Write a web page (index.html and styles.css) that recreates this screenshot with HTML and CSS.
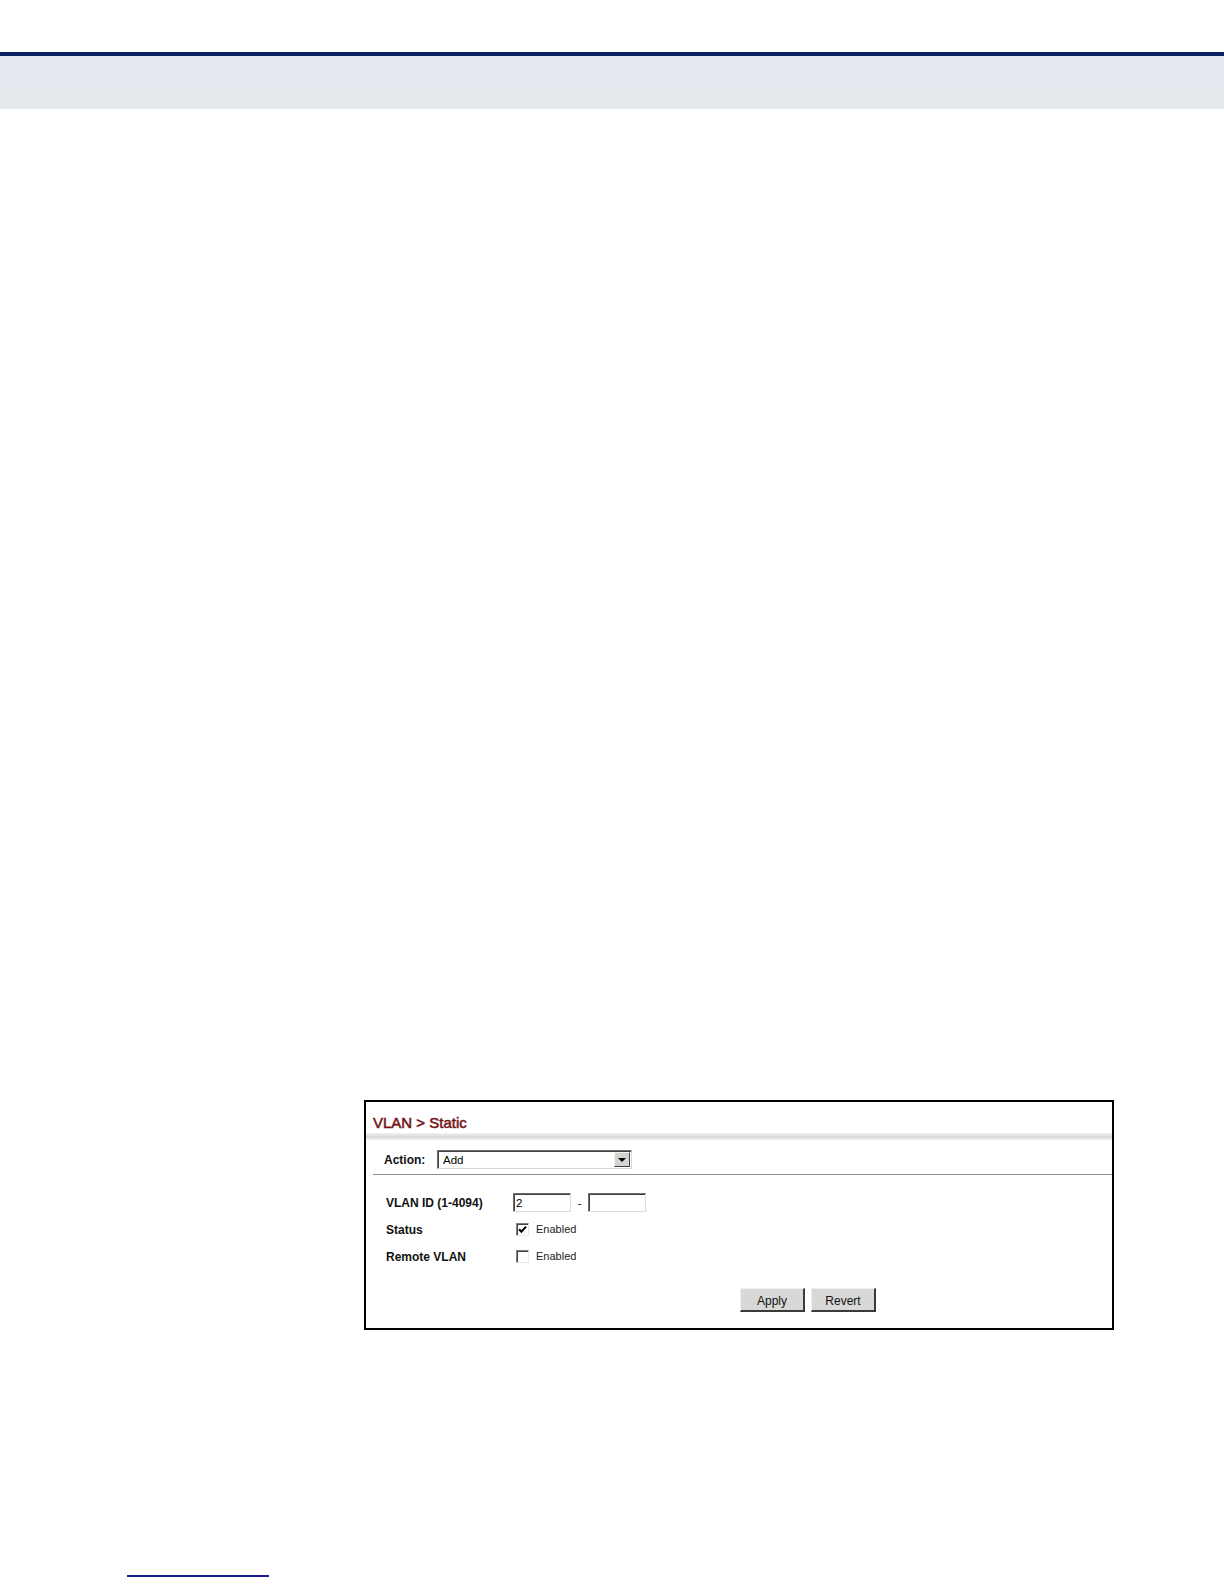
FILE: index.html
```html
<!DOCTYPE html>
<html>
<head>
<meta charset="utf-8">
<title>VLAN Static</title>
<link rel="stylesheet" href="styles.css">
</head>
<body>
<div class="page">
  <header class="page-header">
    <div class="rule"></div>
    <div class="band"></div>
  </header>

  <main class="content">
    <section class="panel">
      <h1 class="panel-title">VLAN &gt; Static</h1>
      <div class="title-shade"></div>

      <div class="action-row">
        <span class="label action-label">Action:</span>
        <div class="select">
          <span class="select-value">Add</span>
          <span class="select-btn">
            <svg width="8" height="4" viewBox="0 0 8 4"><path d="M0 0H8L4 4Z" fill="#000"/></svg>
          </span>
        </div>
      </div>
      <div class="separator"></div>

      <div class="form">
        <div class="form-row">
          <span class="label">VLAN ID (1-4094)</span>
          <div class="field">
            <span class="textbox short">2</span>
            <span class="dash">-</span>
            <span class="textbox short"></span>
          </div>
        </div>
        <div class="form-row">
          <span class="label">Status</span>
          <div class="field">
            <span class="checkbox">
              <svg width="9" height="9" viewBox="0 0 9 9"><path d="M1 4.2 L3.4 6.8 L8 1.6" fill="none" stroke="#000" stroke-width="2.1"/></svg>
            </span>
            <span class="check-text">Enabled</span>
          </div>
        </div>
        <div class="form-row">
          <span class="label">Remote VLAN</span>
          <div class="field">
            <span class="checkbox"></span>
            <span class="check-text">Enabled</span>
          </div>
        </div>
      </div>

      <div class="buttons">
        <span class="btn">Apply</span>
        <span class="btn">Revert</span>
      </div>
    </section>
  </main>

  <footer class="page-footer">
    <div class="footer-rule"></div>
  </footer>
</div>
</body>
</html>
```

FILE: styles.css
```css
* { box-sizing: border-box; }

html, body {
  margin: 0;
  padding: 0;
  background: #ffffff;
}

body {
  font-family: "Liberation Sans", Arial, sans-serif;
  color: #000;
}

.page {
  width: 1224px;
  height: 1584px;
  overflow: hidden;
}

.page-header {
  padding-top: 52px;
}

.rule {
  height: 4px;
  background: #0b2262;
}

.band {
  height: 53px;
  background: linear-gradient(#e4e8f1, #e6e9ec);
}

.content {
  padding-top: 991px;
  padding-left: 364px;
}

.panel {
  width: 750px;
  border: 2px solid #000;
  background: #fff;
  padding-bottom: 16px;
}

.panel-title {
  margin: 0;
  padding: 11px 0 0 7px;
  font-size: 15px;
  line-height: 20px;
  font-weight: normal;
  color: #761519;
  -webkit-text-stroke: 0.55px #761519;
}

.title-shade {
  height: 7px;
  background: linear-gradient(#f2f2f2, #d9d9d9 55%, #f3f3f3);
}

.action-row {
  display: flex;
  align-items: center;
  padding: 10px 0 5px 18px;
}

.label {
  font-size: 12px;
  font-weight: bold;
  color: #111;
}

.action-label {
  width: 53px;
}

.select {
  width: 195px;
  height: 19px;
  display: flex;
  align-items: center;
  justify-content: space-between;
  border-top: 1px solid #6f6f6f;
  border-left: 1px solid #6f6f6f;
  border-right: 1px solid #d8d8d8;
  border-bottom: 1px solid #d8d8d8;
  box-shadow: inset 1px 1px 0 #404040;
  padding: 0 1px 0 5px;
}

.select-value {
  font-size: 11.5px;
  color: #000;
}

.select-btn {
  width: 16px;
  height: 15px;
  background: #d6d3ce;
  border-top: 1px solid #f4f4f4;
  border-left: 1px solid #f4f4f4;
  border-right: 1px solid #404040;
  border-bottom: 1px solid #404040;
  display: flex;
  align-items: center;
  justify-content: center;
}

.separator {
  margin-left: 7px;
  border-top: 1px solid #8c8c8c;
}

.form {
  padding: 14px 0 0 20px;
}

.form-row {
  display: grid;
  grid-template-columns: 127px 1fr;
  align-items: center;
  height: 27px;
}

.field {
  display: flex;
  align-items: center;
}

.textbox {
  display: inline-flex;
  align-items: center;
  height: 19px;
  border-top: 1px solid #6f6f6f;
  border-left: 1px solid #6f6f6f;
  border-right: 1px solid #dcdcdc;
  border-bottom: 1px solid #dcdcdc;
  box-shadow: inset 1px 1px 0 #404040;
  padding-left: 2px;
  font-size: 11.5px;
}

.textbox.short {
  width: 58px;
}

.dash {
  width: 17px;
  text-align: center;
  font-size: 11px;
}

.checkbox {
  width: 13px;
  height: 13px;
  margin-left: 3px;
  border-top: 1px solid #808080;
  border-left: 1px solid #808080;
  border-right: 1px solid #e8e8e8;
  border-bottom: 1px solid #e8e8e8;
  box-shadow: inset 1px 1px 0 #404040;
  background: #fff;
  display: inline-flex;
  align-items: center;
  justify-content: center;
}

.check-text {
  margin-left: 7px;
  font-size: 11px;
  color: #222;
  position: relative;
  top: -1px;
}

.buttons {
  display: flex;
  gap: 6px;
  padding: 18px 0 0 374px;
}

.btn {
  width: 65px;
  height: 24px;
  display: inline-flex;
  align-items: center;
  justify-content: center;
  font-size: 12px;
  color: #111;
  background: #d8d8d6;
  border-top: 1px solid #f0f0f0;
  border-left: 1px solid #f0f0f0;
  border-right: 2px solid #3a3a3a;
  border-bottom: 2px solid #3a3a3a;
  padding-top: 2px;
}

.page-footer {
  padding-top: 245px;
  padding-left: 127px;
}

.footer-rule {
  width: 142px;
  height: 2px;
  background: #1c1c94;
}
```
